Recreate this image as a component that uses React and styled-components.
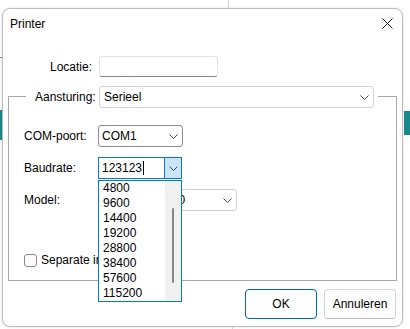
import React from 'react'
import styled, { createGlobalStyle } from 'styled-components'

const Global = createGlobalStyle`
  html, body {
    margin: 0;
    padding: 0;
    background: #fff;
  }
  body {
    font-family: "Liberation Sans", Arial, sans-serif;
    font-size: 12px;
    color: #000;
  }
`

const Desktop = styled.div`
  position: relative;
  width: 410px;
  height: 329px;
  overflow: hidden;
  padding: 8px 0 0 2px;
  box-sizing: border-box;
`

const BackPiece = styled.div`
  position: absolute;
  left: ${p => p.x}px;
  top: ${p => p.y}px;
  width: ${p => p.w}px;
  height: ${p => p.h}px;
  background: ${p => p.color};
`

const Dialog = styled.div`
  position: relative;
  width: 401px;
  height: 319px;
  box-sizing: border-box;
  border: 1px solid #bcbcbc;
  border-radius: 8px;
  background: #fff;
  display: flex;
  flex-direction: column;
  box-shadow: 0 0 3px rgba(0, 0, 0, 0.12);
`

const TitleBar = styled.div`
  height: 29px;
  display: flex;
  align-items: center;
  justify-content: space-between;
  padding: 0 9px 0 7px;
`

const Title = styled.span`
  font-size: 12px;
`

const CloseButton = styled.div`
  width: 12px;
  height: 12px;
  display: flex;
  align-items: center;
  justify-content: center;
`

const Content = styled.div`
  padding: 0 5px;
  display: flex;
  flex-direction: column;
`

const LocationRow = styled.div`
  margin-top: 18px;
  display: flex;
  align-items: center;
`

const RightLabel = styled.label`
  width: 91px;
  padding-right: 7px;
  box-sizing: border-box;
  text-align: right;
`

const TextInput = styled.div`
  width: 119px;
  height: 21px;
  box-sizing: border-box;
  border: 1px solid #e3e3e3;
  border-bottom-color: #868686;
  border-radius: 3px;
`

const Group = styled.div`
  margin-top: 19px;
  height: 185px;
  box-sizing: border-box;
  border: 1px solid #a9a9a9;
  padding-left: 15px;
  display: flex;
  flex-direction: column;
`

const Legend = styled.div`
  align-self: flex-start;
  display: flex;
  align-items: center;
  margin: -11px 0 0 2px;
  padding: 0 4px 0 9px;
  background: #fff;
`

const LegendLabel = styled.label`
  width: 64px;
`

const Combo = styled.div`
  position: relative;
  width: ${p => p.w}px;
  height: 22px;
  box-sizing: border-box;
  border: 1px solid ${p => (p.focused ? '#0078d7' : p.dark ? '#8c8c8c' : '#d3d3d3')};
  border-radius: ${p => (p.focused ? 0 : 3)}px;
  background: #fff;
  display: flex;
  align-items: center;
`

const ComboText = styled.span`
  flex: 1;
  padding-left: ${p => p.pad || 3}px;
  white-space: nowrap;
  overflow: hidden;
  display: flex;
  align-items: center;
`

const Caret = styled.span`
  display: inline-block;
  width: 1px;
  height: 14px;
  background: #000;
  margin-left: 1px;
`

const ComboButton = styled.div`
  width: ${p => p.w || 16}px;
  height: 100%;
  display: flex;
  align-items: center;
  justify-content: center;
  background: ${p => (p.active ? '#cce4f7' : 'transparent')};
  border-left: ${p => (p.active ? '1px solid #0078d7' : 'none')};
`

const Fields = styled.div`
  margin-top: 17px;
  display: grid;
  grid-template-columns: 74px auto;
  grid-auto-rows: 22px;
  row-gap: 10px;
  align-items: center;
  justify-items: start;
`

const DropList = styled.div`
  position: absolute;
  left: -1px;
  top: 22px;
  width: 84px;
  height: 122px;
  box-sizing: border-box;
  border: 1px solid #0078d7;
  background: #fff;
  display: flex;
  z-index: 5;
`

const Items = styled.div`
  flex: 1;
  display: flex;
  flex-direction: column;
`

const Item = styled.div`
  height: 15px;
  line-height: 15px;
  padding-left: 4px;
`

const ScrollTrack = styled.div`
  width: 16px;
  background: #f0f0f0;
  display: flex;
  justify-content: center;
  padding-top: 27px;
  box-sizing: border-box;
`

const ScrollThumb = styled.div`
  width: 2px;
  height: 75px;
  border-radius: 1px;
  background: #868686;
`

const CheckRow = styled.div`
  margin-top: 42px;
  display: flex;
  align-items: center;
  gap: 4px;
`

const CheckBox = styled.div`
  width: 13px;
  height: 13px;
  box-sizing: border-box;
  border: 1px solid #8a8a8a;
  border-radius: 3px;
  background: #fbfbfb;
`

const Buttons = styled.div`
  margin-top: 8px;
  padding-right: 1px;
  display: flex;
  justify-content: flex-end;
  gap: 7px;
`

const Button = styled.div`
  width: 72px;
  height: 30px;
  box-sizing: border-box;
  border: 1px solid ${p => (p.primary ? '#0067c0' : '#d5d5d5')};
  border-bottom-color: ${p => (p.primary ? '#0067c0' : '#bcbcbc')};
  border-radius: 4px;
  background: #fdfdfd;
  display: flex;
  align-items: center;
  justify-content: center;
`

const Chevron = () => (
  <svg width="9" height="5" viewBox="0 0 9 5">
    <polyline points="0.5,0.5 4.5,4.5 8.5,0.5" fill="none" stroke="#4a4a4a" strokeWidth="1" />
  </svg>
)

const rates = ['4800', '9600', '14400', '19200', '28800', '38400', '57600', '115200']

export default function App() {
  return (
    <Desktop>
      <Global />
      <BackPiece x={228} y={0} w={1} h={8} color="#d6d6d6" />
      <BackPiece x={0} y={57} w={2} h={1} color="#8a8a8a" />
      <BackPiece x={0} y={110} w={2} h={30} color="#168a8a" />
      <BackPiece x={404} y={111} w={6} h={24} color="#168a8a" />
      <BackPiece x={232} y={327} w={1} h={2} color="#d6d6d6" />
      <Dialog>
        <TitleBar>
          <Title>Printer</Title>
          <CloseButton>
            <svg width="11" height="11" viewBox="0 0 11 11">
              <path d="M0.5 0.5 L10.5 10.5 M10.5 0.5 L0.5 10.5" stroke="#1a1a1a" strokeWidth="1" />
            </svg>
          </CloseButton>
        </TitleBar>
        <Content>
          <LocationRow>
            <RightLabel>Locatie:</RightLabel>
            <TextInput />
          </LocationRow>
          <Group>
            <Legend>
              <LegendLabel>Aansturing:</LegendLabel>
              <Combo w={275}>
                <ComboText pad={4}>Serieel</ComboText>
                <ComboButton w={18}>
                  <Chevron />
                </ComboButton>
              </Combo>
            </Legend>
            <Fields>
              <label>COM-poort:</label>
              <Combo w={85} dark>
                <ComboText>COM1</ComboText>
                <ComboButton w={18}>
                  <Chevron />
                </ComboButton>
              </Combo>
              <label>Baudrate:</label>
              <Combo w={84} focused>
                <ComboText>
                  123123
                  <Caret />
                </ComboText>
                <ComboButton active>
                  <Chevron />
                </ComboButton>
                <DropList>
                  <Items>
                    {rates.map(r => (
                      <Item key={r}>{r}</Item>
                    ))}
                  </Items>
                  <ScrollTrack>
                    <ScrollThumb />
                  </ScrollTrack>
                </DropList>
              </Combo>
              <label>Model:</label>
              <Combo w={139}>
                <ComboText pad={7}>Epson TM-T20</ComboText>
                <ComboButton w={18}>
                  <Chevron />
                </ComboButton>
              </Combo>
            </Fields>
            <CheckRow>
              <CheckBox />
              <span>Separate instellingen</span>
            </CheckRow>
          </Group>
          <Buttons>
            <Button primary>OK</Button>
            <Button>Annuleren</Button>
          </Buttons>
        </Content>
      </Dialog>
    </Desktop>
  )
}
